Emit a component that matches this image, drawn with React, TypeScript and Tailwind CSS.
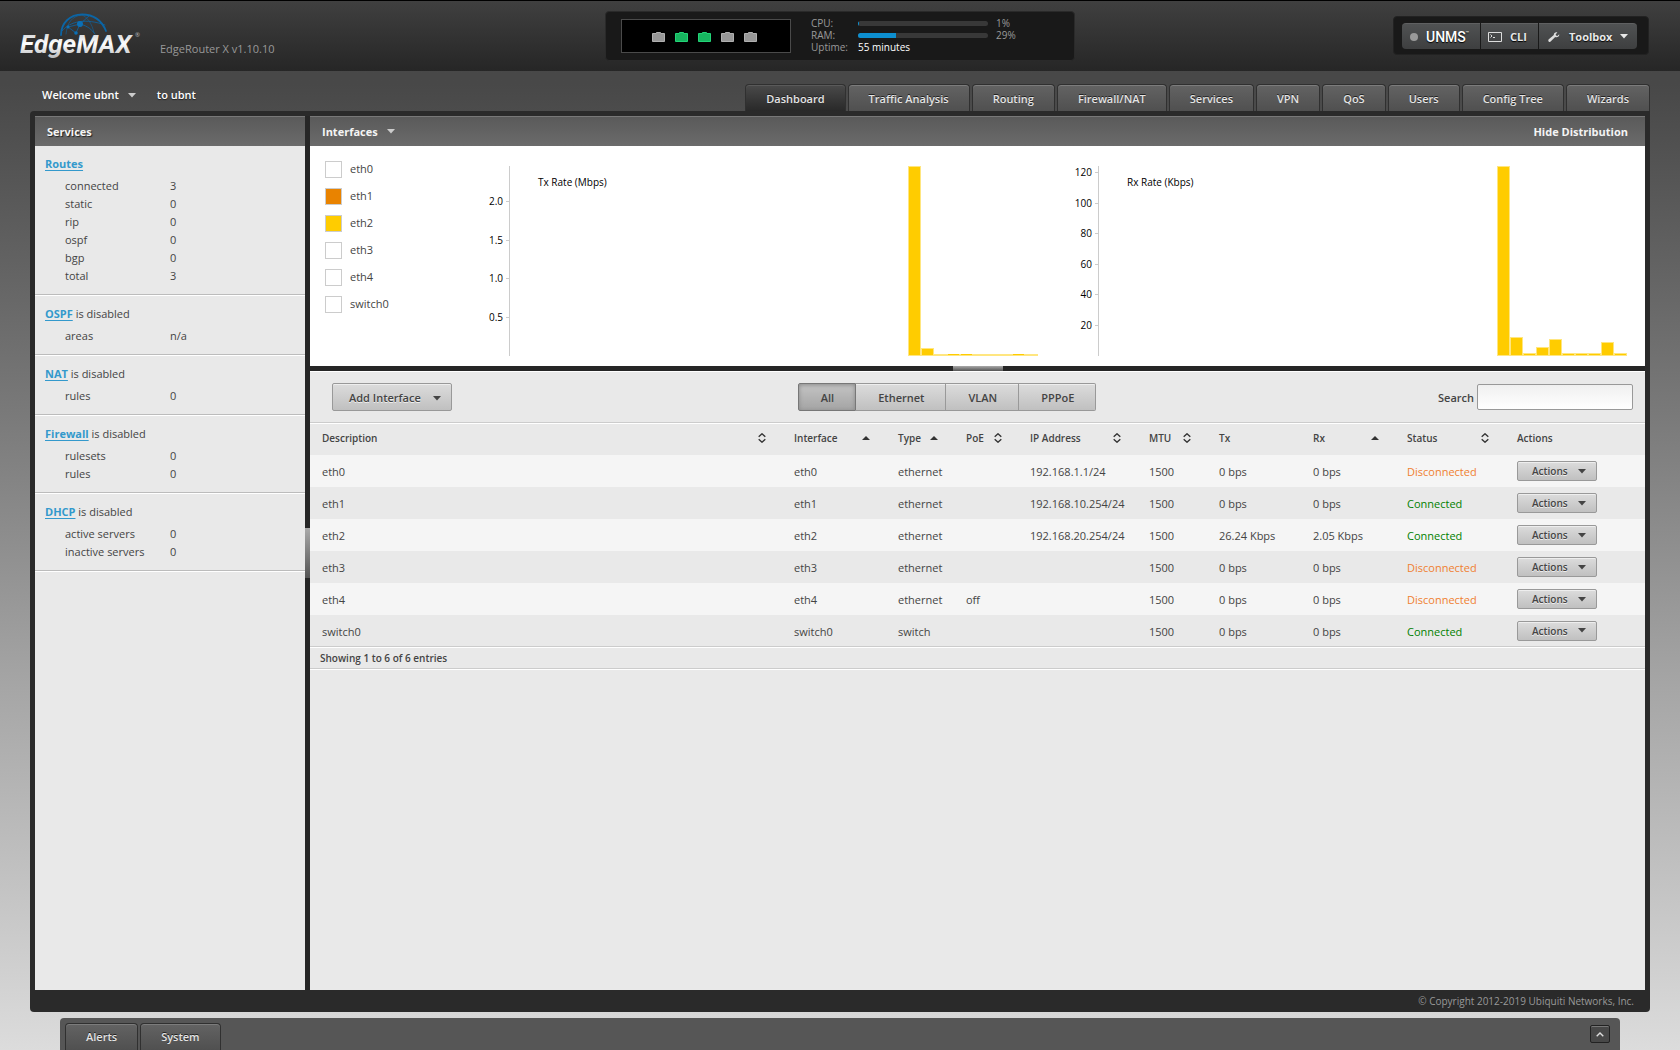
import type { ReactNode } from "react";
import clsx from "clsx";

const TABS = ["Dashboard", "Traffic Analysis", "Routing", "Firewall/NAT", "Services", "VPN", "QoS", "Users", "Config Tree", "Wizards"];

const PORTS = [false, true, true, false, false];

const SERVICES = [
  { name: "Routes", rows: [["connected", "3"], ["static", "0"], ["rip", "0"], ["ospf", "0"], ["bgp", "0"], ["total", "3"]] },
  { name: "OSPF", note: "is disabled", rows: [["areas", "n/a"]] },
  { name: "NAT", note: "is disabled", rows: [["rules", "0"]] },
  { name: "Firewall", note: "is disabled", rows: [["rulesets", "0"], ["rules", "0"]] },
  { name: "DHCP", note: "is disabled", rows: [["active servers", "0"], ["inactive servers", "0"]] },
];

const LEGEND = [
  { name: "eth0", checked: false, color: "checked:bg-white" },
  { name: "eth1", checked: true, color: "checked:bg-[#e98300]" },
  { name: "eth2", checked: true, color: "checked:bg-[#ffcc00]" },
  { name: "eth3", checked: false, color: "checked:bg-white" },
  { name: "eth4", checked: false, color: "checked:bg-white" },
  { name: "switch0", checked: false, color: "checked:bg-white" },
];

type Sort = "both" | "up" | null;

const COLUMNS: { title: string; width: string; sort: Sort }[] = [
  { title: "Description", width: "w-auto", sort: "both" },
  { title: "Interface", width: "w-[104px]", sort: "up" },
  { title: "Type", width: "w-[68px]", sort: "up" },
  { title: "PoE", width: "w-16", sort: "both" },
  { title: "IP Address", width: "w-[119px]", sort: "both" },
  { title: "MTU", width: "w-[70px]", sort: "both" },
  { title: "Tx", width: "w-[94px]", sort: null },
  { title: "Rx", width: "w-[94px]", sort: "up" },
  { title: "Status", width: "w-[110px]", sort: "both" },
  { title: "Actions", width: "w-[140px]", sort: null },
];

const INTERFACES = [
  { name: "eth0", type: "ethernet", poe: "", ip: "192.168.1.1/24", tx: "0 bps", rx: "0 bps", up: false },
  { name: "eth1", type: "ethernet", poe: "", ip: "192.168.10.254/24", tx: "0 bps", rx: "0 bps", up: true },
  { name: "eth2", type: "ethernet", poe: "", ip: "192.168.20.254/24", tx: "26.24 Kbps", rx: "2.05 Kbps", up: true },
  { name: "eth3", type: "ethernet", poe: "", ip: "", tx: "0 bps", rx: "0 bps", up: false },
  { name: "eth4", type: "ethernet", poe: "off", ip: "", tx: "0 bps", rx: "0 bps", up: false },
  { name: "switch0", type: "switch", poe: "", ip: "", tx: "0 bps", rx: "0 bps", up: true },
];

const TX = {
  title: "Tx Rate (Mbps)",
  ticks: [["2.0", 35], ["1.5", 74], ["1.0", 112], ["0.5", 151]] as [string, number][],
  bars: [190, 8, 1, 2, 2, 1, 1, 1, 2, 1],
};

const RX = {
  title: "Rx Rate (Kbps)",
  ticks: [["120", 6], ["100", 37], ["80", 67], ["60", 98], ["40", 128], ["20", 159]] as [string, number][],
  bars: [190, 19, 3, 9, 17, 3, 3, 3, 14, 3],
};

function Caret({ className }: { className?: string }) {
  return (
    <svg viewBox="0 0 8 5" className={clsx("h-[5px] w-2 shrink-0", className)} fill="currentColor" aria-hidden="true">
      <path d="M0 0h8L4 4.6z" />
    </svg>
  );
}

function SortIcon({ sort }: { sort: Sort }) {
  if (sort === "up") {
    return (
      <svg viewBox="0 0 8 4" className="h-1 w-2" fill="#333" aria-hidden="true">
        <path d="M0 4h8L4 0z" />
      </svg>
    );
  }
  return (
    <svg viewBox="0 0 8 10" className="h-2.5 w-2" fill="none" stroke="#333" strokeWidth="1.4" aria-hidden="true">
      <path d="M.7 3.8 4 .8l3.3 3M.7 6.2l3.3 3 3.3-3" />
    </svg>
  );
}

function Logo() {
  return (
    <a href="#" aria-label="EdgeMAX" className="block h-[50px] w-[126px]">
      <svg viewBox="0 0 126 50" className="h-[50px] w-[126px]">
        <defs>
          <linearGradient id="metal" x1="0" y1="0" x2="0" y2="1">
            <stop offset="0" stopColor="#c4c6c9" />
            <stop offset="0.5" stopColor="#ffffff" />
            <stop offset="1" stopColor="#b4b6b9" />
          </linearGradient>
        </defs>
        <g fill="none" stroke="#0b65a5" strokeLinecap="round">
          <path d="M41 24C41 12 50 3.500 62 3.500S82 10 86 20" strokeWidth="1.800" />
          <path d="M46 23C47 12 52 5 62 4c5 2 10 8 12 18" strokeWidth=".6" />
          <path d="M42 20c8-10 24-13 43-6M48 16l12-3c8 2 12 6 15 10M60 13 56 22M60 13l9-8M48 16l8 6" strokeWidth=".8" />
        </g>
        <g fill="#0b6fb5">
          <circle cx="60" cy="13" r="3" />
          <circle cx="48" cy="16" r="1.500" />
          <circle cx="56" cy="22" r="1.800" />
        </g>
        <text x="0" y="42" fill="url(#metal)" fontFamily="Roboto, sans-serif" fontStyle="italic" fontWeight="700" fontSize="26">
          EdgeMAX
        </text>
        <text x="115" y="26" fill="#b9b9b9" fontFamily="'Open Sans', sans-serif" fontSize="6">®</text>
      </svg>
    </a>
  );
}

function PortIcon({ up }: { up: boolean }) {
  return (
    <svg viewBox="0 0 13 10" className="h-2.5 w-[13px]" aria-hidden="true">
      <path
        d="M.5 1.500h4v-1h4v1h4v8H.5z"
        fill={up ? "#17b45f" : "#979797"}
        stroke={up ? "#22d477" : "#b0b0b0"}
      />
    </svg>
  );
}

function Meter({ label, value }: { label: string; value: number }) {
  return (
    <>
      <dt>{label}:</dt>
      <dd className="flex items-center gap-2">
        <span className="h-[5px] w-[130px] overflow-hidden rounded-sm bg-[#383838]">
          <span className="block h-full bg-[#0d8fd0]" style={{ width: `${value}%` }} />
        </span>
        {value}%
      </dd>
    </>
  );
}

function ToolButton({ children, className }: { children: ReactNode; className?: string }) {
  return (
    <button
      type="button"
      className={clsx(
        "flex h-[26px] items-center border-t border-[#5f6061] bg-linear-to-b from-[#505253] to-[#3e3f40] pt-px font-bold text-[#e8e8e8] [text-shadow:0_1px_1px_#000]",
        className,
      )}
    >
      {children}
    </button>
  );
}

function Header() {
  return (
    <header className="grid h-[71px] grid-cols-[1fr_auto_1fr] items-start border-t border-black bg-linear-to-b from-[#404040] to-[#262626]">
      <div className="flex items-start pt-2.5 pl-5">
        <Logo />
        <p className="mt-[29px] ml-3.5 text-[#999]">EdgeRouter X v1.10.10</p>
      </div>

      <div className="mt-2.5 flex h-[50px] w-[470px] items-start gap-5 rounded border border-[#2a2a2a] bg-[#191919] pt-[7px] pl-[15px] text-[10px]">
        <div className="flex h-[34px] w-[170px] items-center justify-center gap-2.5 border border-[#4a4a4a] bg-black pt-0.5 pr-[3px]">
          {PORTS.map((up, i) => (
            <PortIcon key={i} up={up} />
          ))}
        </div>
        <dl className="-mt-0.5 grid grid-cols-[47px_auto] leading-3 text-[#999]">
          <Meter label="CPU" value={1} />
          <Meter label="RAM" value={29} />
          <dt>Uptime:</dt>
          <dd className="text-white">55 minutes</dd>
        </dl>
      </div>

      <div className="mt-[15px] mr-[31px] flex h-[39px] items-center gap-px justify-self-end rounded border border-[#222] bg-[#191919] pr-[11px] pl-2">
        <ToolButton className="w-[78px] rounded-l-sm pl-2">
          <span className="mr-2 size-2 shrink-0 rounded-full bg-[#999]" />
          <span className="font-[Roboto,sans-serif] text-sm font-medium text-white">UNMS</span>
          <span className="-mt-2 text-[4px]">™</span>
        </ToolButton>
        <ToolButton className="w-[57px] pl-[7px]">
          <svg viewBox="0 0 14 10" className="mr-2 h-2.5 w-3.5" fill="none" stroke="#ddd" aria-hidden="true">
            <path d="M.5.5h13v9H.5zM2.500 2.500l1.500 1.500-1.500 1.500M5 5.500h2" />
          </svg>
          CLI
        </ToolButton>
        <ToolButton className="w-[98px] rounded-r-sm pl-[9px]">
          <svg viewBox="0 0 12 10" className="mr-[9px] h-2.5 w-3" fill="#ddd" aria-hidden="true">
            <path d="M11.200 2.200 9.400 3.900 8 3.500 7.700 2.200 9.400.4C7.600-.3 5.700.9 5.800 3L.8 7.300C0 8 .2 9.200.9 9.700c.7.4 1.500.2 2-.4L7.200 5c2.500.7 4.400-.8 4-2.800z" />
          </svg>
          Toolbox
          <Caret className="ml-2" />
        </ToolButton>
      </div>
    </header>
  );
}

function NavBar() {
  return (
    <div className="flex h-10 items-end justify-between pr-[30px] pl-[42px]">
      <div className="flex h-[25px] items-start font-semibold text-white [text-shadow:0_1px_1px_#222]">
        <button type="button" className="flex items-center gap-[9px] font-semibold">
          Welcome ubnt <Caret className="text-[#ccc]" />
        </button>
        <span className="ml-[21px]">to ubnt</span>
      </div>
      <nav className="flex gap-0.5">
        {TABS.map((tab, i) => (
          <a
            key={tab}
            href="#"
            className={clsx(
              "h-[27px] rounded-t border border-b-0 border-[#303030] px-5 pt-[5px] font-semibold text-[#e4e4e4] [text-shadow:0_-1px_0_#222]",
              i === 0
                ? "bg-linear-to-b from-[#4a4a4a] to-[#292929] shadow-[inset_0_1px_0_#5a5a5a]"
                : "bg-linear-to-b from-[#636363] to-[#505050] shadow-[inset_0_1px_0_#7c7c7c]",
            )}
          >
            {tab}
          </a>
        ))}
      </nav>
    </div>
  );
}

function PanelHeader({ children }: { children: ReactNode }) {
  return (
    <div className="flex h-[30px] shrink-0 items-center justify-between border-t border-[#787878] bg-linear-to-b from-[#5a5a5a] to-[#6b6b6b] pr-[17px] pl-3 font-bold text-[#f4f4f4] [text-shadow:1px_1px_1px_#222]">
      {children}
    </div>
  );
}

function ServicesPanel() {
  return (
    <aside className="flex w-[270px] shrink-0 flex-col bg-[#e9e9e9]">
      <PanelHeader>
        <h2>Services</h2>
      </PanelHeader>
      {SERVICES.map((service) => (
        <section key={service.name} className="border-b border-white">
          <div className="border-b border-[#bcbcbc] px-2.5 py-[9px]">
            <h3 className="mb-1">
              <a href="#" className="font-bold text-[#3399cc] underline underline-offset-2">{service.name}</a> {service.note}
            </h3>
            <dl className="grid grid-cols-[105px_1fr] pl-5">
              {service.rows.map(([label, value]) => (
                <div key={label} className="contents">
                  <dt>{label}</dt>
                  <dd>{value}</dd>
                </div>
              ))}
            </dl>
          </div>
        </section>
      ))}
    </aside>
  );
}

function RateChart({ title, ticks, bars }: typeof TX) {
  return (
    <figure className="flex h-[190px] min-w-0 flex-1">
      <svg className="h-[190px] w-[30px] shrink-0" aria-hidden="true">
        <path d="M29.500 0v190" stroke="#ccc" />
        {ticks.map(([label, y]) => (
          <g key={label}>
            <path d={`M26 ${y + 0.5}h3`} stroke="#ccc" />
            <text x="23" y={y + 4} textAnchor="end" fontSize="10" fill="#000">
              {label}
            </text>
          </g>
        ))}
      </svg>
      <figcaption className="mt-[7px] ml-7 flex-1 text-[10px] text-black">{title}</figcaption>
      <svg className="h-[190px] w-[130px] shrink-0" aria-hidden="true">
        {bars.map((h, i) => (
          <g key={i}>
            <rect x={i * 13} y={190 - Math.max(h, 2)} width="13" height={Math.max(h, 2)} fill="#ffe680" />
            <rect x={i * 13 + 1} y={h > 2 ? 191 - h : 190 - h} width="11" height={h > 2 ? h - 2 : h - 1} fill="#ffcc00" />
          </g>
        ))}
      </svg>
    </figure>
  );
}

function Distribution() {
  return (
    <div className="flex h-[220px] shrink-0 bg-white pr-[18px]">
      <ul className="w-[170px] shrink-0 space-y-[9px] pt-3.5 pl-[15px]">
        {LEGEND.map((item) => (
          <li key={item.name}>
            <label className="flex items-center gap-2">
              <input
                type="checkbox"
                defaultChecked={item.checked}
                className={clsx("size-[17px] appearance-none border border-[#ccc] bg-white", item.color)}
              />
              {item.name}
            </label>
          </li>
        ))}
      </ul>
      <div className="flex flex-1 gap-[31px] pt-5">
        <RateChart {...TX} />
        <RateChart {...RX} />
      </div>
    </div>
  );
}

function Toolbar() {
  return (
    <div className="flex h-[52px] shrink-0 items-center justify-between border-t border-b border-t-white border-b-[#ccc] pr-3 pl-[22px]">
      <button
        type="button"
        className="flex h-7 w-[120px] items-center justify-between rounded-xs border border-[#999] bg-linear-to-b from-[#dcdcdc] to-[#c0c0c0] pt-0.5 pr-2.5 pl-4 font-semibold text-[#444] shadow-[inset_0_1px_0_#eee] [text-shadow:0_1px_0_#eee]"
      >
        Add Interface <Caret />
      </button>
      <div className="ml-1 flex h-7 rounded-xs text-[#444] [text-shadow:0_1px_0_#eee]">
        <button type="button" className="rounded-l-xs border border-[#777] bg-linear-to-b from-[#c4c4c4] to-[#a4a4a4] pt-0.5 pr-[21px] pl-[22px] font-semibold shadow-[inset_0_1px_4px_#888]">
          All
        </button>
        {["Ethernet", "VLAN", "PPPoE"].map((name) => (
          <button
            key={name}
            type="button"
            className="border border-l-0 border-[#999] bg-linear-to-b from-[#dcdcdc] to-[#c0c0c0] pt-0.5 pr-[21px] pl-[22px] font-semibold shadow-[inset_0_1px_0_#eee] last:rounded-r-xs"
          >
            {name}
          </button>
        ))}
      </div>
      <label className="flex items-center gap-[3px] font-semibold">
        <span className="pt-0.5">Search</span>
        <input type="text" className="h-[26px] w-[156px] rounded-xs border border-[#999] bg-linear-to-b from-[#f0f0f0] to-white px-2" />
      </label>
    </div>
  );
}

function InterfaceTable() {
  return (
    <div className="border-t border-b border-t-white border-b-[#ccc]">
      <table className="w-full table-fixed text-left">
        <thead>
          <tr className="h-[31px] text-[10px]">
            {COLUMNS.map((col) => (
              <th key={col.title} className={clsx("pr-4 pb-1 pl-3 font-semibold", col.width)}>
                <span className="flex items-center justify-between whitespace-nowrap">
                  {col.title}
                  {col.sort && <SortIcon sort={col.sort} />}
                </span>
              </th>
            ))}
          </tr>
        </thead>
        <tbody>
          {INTERFACES.map((row) => (
            <tr key={row.name} className="h-8 whitespace-nowrap last:h-[31px] odd:bg-[#f5f5f5] *:pl-3 [&>td:not(:last-child)]:pt-0.5">
              <td>{row.name}</td>
              <td>{row.name}</td>
              <td>{row.type}</td>
              <td>{row.poe}</td>
              <td>{row.ip}</td>
              <td>1500</td>
              <td>{row.tx}</td>
              <td>{row.rx}</td>
              <td className={row.up ? "text-[#008000]" : "text-[#f08030]"}>{row.up ? "Connected" : "Disconnected"}</td>
              <td>
                <button
                  type="button"
                  className="flex h-5 w-20 items-center justify-between rounded-xs border border-[#999] bg-linear-to-b from-[#dcdcdc] to-[#c0c0c0] pr-2.5 pl-3.5 text-[10px] font-semibold text-[#444] shadow-[inset_0_1px_0_#eee] [text-shadow:0_1px_0_#eee]"
                >
                  Actions <Caret />
                </button>
              </td>
            </tr>
          ))}
        </tbody>
      </table>
    </div>
  );
}

function InterfacesPanel() {
  return (
    <main className="flex min-w-0 flex-1 flex-col bg-[#e9e9e9]">
      <PanelHeader>
        <button type="button" className="flex items-center gap-[9px] font-bold">
          Interfaces <Caret className="text-[#ccc]" />
        </button>
        <button type="button" className="font-bold">Hide Distribution</button>
      </PanelHeader>
      <Distribution />
      <div className="flex h-[5px] shrink-0 justify-center bg-[#262626]">
        <button type="button" aria-label="Resize distribution" className="w-[50px] bg-linear-to-b from-[#aaa] to-[#555]" />
      </div>
      <Toolbar />
      <InterfaceTable />
      <p className="h-[22px] border-t border-b border-t-white border-b-[#ccc] pt-px pl-2.5 text-[10px] font-semibold">
        Showing 1 to 6 of 6 entries
      </p>
      <div className="flex-1 border-t border-white" />
    </main>
  );
}

function AlertBar() {
  return (
    <div className="mx-[60px] mt-1.5 flex h-8 items-start justify-between rounded-t bg-[#565656] pt-[5px] pr-2.5 pl-[5px]">
      <div className="flex gap-0.5">
        {["Alerts", "System"].map((name) => (
          <button
            key={name}
            type="button"
            className="h-[27px] rounded-t border border-b-0 border-[#303030] bg-linear-to-b from-[#636363] to-[#505050] px-5 font-semibold text-[#e4e4e4] shadow-[inset_0_1px_0_#7c7c7c] [text-shadow:0_-1px_0_#222]"
          >
            {name}
          </button>
        ))}
      </div>
      <button
        type="button"
        aria-label="Expand"
        className="mt-0.5 flex h-[18px] w-5 items-center justify-center rounded-xs border border-[#222] bg-[#484848] shadow-[inset_0_1px_0_#777]"
      >
        <svg viewBox="0 0 8 5" className="h-[5px] w-2" fill="none" stroke="#ddd" strokeWidth="1.400" aria-hidden="true">
          <path d="M.7 4.300 4 1l3.300 3.300" />
        </svg>
      </button>
    </div>
  );
}

export default function App() {
  return (
    <div className="flex min-h-screen flex-col bg-linear-to-b from-[#484848] from-8% via-[#a5a5a5] via-65% to-[#dcdcdc] font-['Open_Sans',sans-serif] text-[11px] leading-[18px] text-[#444]">
      <Header />
      <NavBar />
      <div className="mx-[30px] flex flex-1 flex-col rounded rounded-tr-none bg-[#2a2a2a] px-[5px] pt-[5px]">
        <div className="flex flex-1">
          <ServicesPanel />
          <div className="flex w-[5px] shrink-0 items-center bg-[#262626]">
            <button type="button" aria-label="Collapse services" className="h-[50px] w-[5px] bg-linear-to-b from-[#aaa] to-[#555]" />
          </div>
          <InterfacesPanel />
        </div>
        <footer className="h-[22px] pt-0.5 pr-[11px] text-right text-[10px] text-[#999]">
          © Copyright 2012-2019 Ubiquiti Networks, Inc.
        </footer>
      </div>
      <AlertBar />
    </div>
  );
}
